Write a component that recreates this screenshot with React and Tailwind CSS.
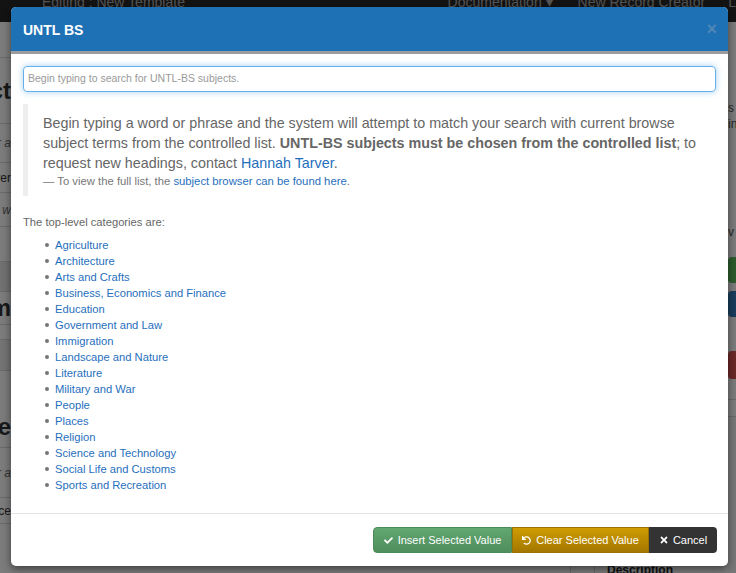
import React from 'react';
import { FaCheck, FaUndo, FaTimes } from 'react-icons/fa';

const categories = [
  'Agriculture',
  'Architecture',
  'Arts and Crafts',
  'Business, Economics and Finance',
  'Education',
  'Government and Law',
  'Immigration',
  'Landscape and Nature',
  'Literature',
  'Military and War',
  'People',
  'Places',
  'Religion',
  'Science and Technology',
  'Social Life and Customs',
  'Sports and Recreation',
];

// page that sits behind the modal backdrop (only its edges show)
function BackgroundPage() {
  return (
    <div className="flex h-full flex-col">
      <div className="flex h-[22px] shrink-0 overflow-hidden bg-[#262626] text-[14px] leading-[16px] text-[#a8a8a8]">
        <div className="-mt-[6px] flex w-full">
          <span className="ml-[42px]">Editing : New Template</span>
          <span className="ml-auto">Documentation ▾</span>
          <span className="ml-[25px]">New Record Creator</span>
          <span className="ml-[23px]">L</span>
        </div>
      </div>

      <div className="flex flex-1">
        {/* left column, clipped */}
        <div className="flex w-[11px] flex-col items-end overflow-hidden whitespace-nowrap text-[#333]">
          <div className="h-[36px] w-full border-b border-[#d8d8d8]" />
          <div className="flex h-[65px] items-center text-[24px] font-bold">Subject</div>
          <div className="flex h-[40px] w-[300px] items-center justify-end border-y border-[#d5d5d5] text-[12px] italic text-[#666]">Enter a</div>
          <div className="flex h-[29px] items-center text-[12px]">Browse over</div>
          <div className="flex h-[35px] w-[300px] items-center justify-end border-y border-[#d5d5d5] text-[12px] italic text-[#666]">Enter a w</div>
          <div className="h-[35px] w-[300px] border-b border-[#d5d5d5]" />
          <div className="h-[30px] w-[300px] border-b border-[#d5d5d5] bg-[#e2e2e2]" />
          <div className="flex h-[32px] items-center text-[24px] font-bold">Form</div>
          <div className="h-[15px] w-[300px] border-t border-[#d5d5d5]" />
          <div className="h-[32px] w-[300px] border-y border-[#d5d5d5] bg-[#e8e8e8]" />
          <div className="flex h-[77px] w-[300px] items-end justify-end border-b border-[#d5d5d5] pb-[2px] text-[24px] font-bold">Preserve</div>
          <div className="flex h-[50px] w-[300px] items-center justify-end border-b border-[#d5d5d5] text-[12px] italic text-[#666]">Enter a</div>
          <div className="flex h-[26px] w-[300px] items-center justify-end border-b border-[#d5d5d5] text-[12px]">Source</div>
        </div>

        {/* middle, only the bottom table row peeks out */}
        <div className="flex flex-1 flex-col justify-end">
          <div className="flex h-[8px] items-start">
            <div className="ml-[559px] h-full w-[25px] border-x border-[#d5d5d5]" />
            <div className="-mt-[1px] ml-[12px] text-[12px] font-bold leading-[12px] text-[#222]">Description</div>
          </div>
        </div>

        {/* right column, clipped */}
        <div className="flex w-[8px] flex-col overflow-hidden whitespace-nowrap text-[12px] text-[#555]">
          <div className="h-[78px]" />
          <div className="h-[16px] leading-[16px]">s</div>
          <div className="h-[16px] leading-[16px]">in</div>
          <div className="h-[92px]" />
          <div className="h-[16px] leading-[16px]">v</div>
          <div className="h-[17px]" />
          <div className="h-[26px] w-[60px] rounded-[4px] bg-[#5cb85c]" />
          <div className="h-[8px]" />
          <div className="h-[26px] w-[60px] rounded-[4px] bg-[#337ab7]" />
          <div className="h-[34px]" />
          <div className="h-[28px] w-[60px] rounded-[4px] bg-[#d9534f]" />
          <div className="h-[20px]" />
          <div className="h-[18px] border-y border-[#d5d5d5]" />
          <div className="flex-1 bg-[#f0f0f0]" />
        </div>
      </div>
    </div>
  );
}

function SubjectModal() {
  return (
    <div className="ml-[11px] mt-[7px] flex h-[559px] w-[717px] flex-col overflow-hidden rounded-[5px] bg-white shadow-[0_3px_9px_rgba(0,0,0,0.5)]">
      <div className="flex h-[47px] shrink-0 items-center justify-between border-b-[3px] border-[#9c9c9c] bg-[#1e71b5] pl-3 pr-[11px] pt-[2px]">
        <h4 className="text-[14px] font-bold text-white">UNTL BS</h4>
        <span className="-mt-[2px] text-[18px] font-bold leading-none text-[#4f86b8]">×</span>
      </div>

      <div className="flex-1 overflow-hidden px-3 pt-3">
        <div className="flex h-[26px] items-center rounded-[4px] border border-[#66afe9] px-[4px] shadow-[0_0_6px_rgba(102,175,233,0.6)]">
          <span className="text-[10.5px] text-[#999]">Begin typing to search for UNTL-BS subjects.</span>
        </div>

        <blockquote className="mt-3 border-l-[5px] border-[#eee] pb-[8px] pl-[15px] pr-[10px] pt-[9px] text-[14.3px] leading-[20px] text-[#666]">
          <p>
            Begin typing a word or phrase and the system will attempt to match your search with current browse subject terms
            from the controlled list. <b className="font-bold">UNTL-BS subjects must be chosen from the controlled list</b>; to
            request new headings, contact <span className="text-[#1f6fbd]">Hannah Tarver</span>.
          </p>
          <p className="pt-[1px] text-[11.3px] leading-[14px] text-[#777]">
            — To view the full list, the <span className="text-[#1f6fbd]">subject browser can be found here</span>.
          </p>
        </blockquote>

        <p className="mt-[18px] text-[11.2px] leading-[16px] text-[#666]">The top-level categories are:</p>
        <ul className="mt-[7px]">
          {categories.map((c) => (
            <li key={c} className="flex h-[16px] items-center gap-[6px] pl-[22px] text-[11.2px] text-[#1f6fbd]">
              <span className="h-[4px] w-[4px] rounded-full bg-[#777]" />
              {c}
            </li>
          ))}
        </ul>
      </div>

      <div className="flex shrink-0 justify-end border-t border-[#e5e5e5] py-[13px] pr-[11px]">
        <div className="flex h-[26px] text-[11px] text-white">
          <button className="flex w-[139px] items-center justify-center gap-[5px] rounded-l-[4px] border border-[#4c8a5a] bg-linear-to-b from-[#62a771] to-[#4f8d5d]">
            <FaCheck className="h-[9px] w-[9px]" />
            Insert Selected Value
          </button>
          <button className="flex w-[137px] items-center justify-center gap-[5px] border border-[#9a7200] bg-linear-to-b from-[#cf9c03] to-[#a37700]">
            <FaUndo className="h-[9px] w-[9px]" />
            Clear Selected Value
          </button>
          <button className="flex w-[68px] items-center justify-center gap-[4px] rounded-r-[4px] bg-[#333]">
            <FaTimes className="h-[10px] w-[10px]" />
            Cancel
          </button>
        </div>
      </div>
    </div>
  );
}

export default function App() {
  return (
    <div className="relative h-[573px] w-[736px] overflow-hidden bg-[#f8f8f8] font-['Liberation_Sans',Arial,sans-serif]">
      <BackgroundPage />
      <div className="absolute inset-0 bg-black/50">
        <SubjectModal />
      </div>
    </div>
  );
}
